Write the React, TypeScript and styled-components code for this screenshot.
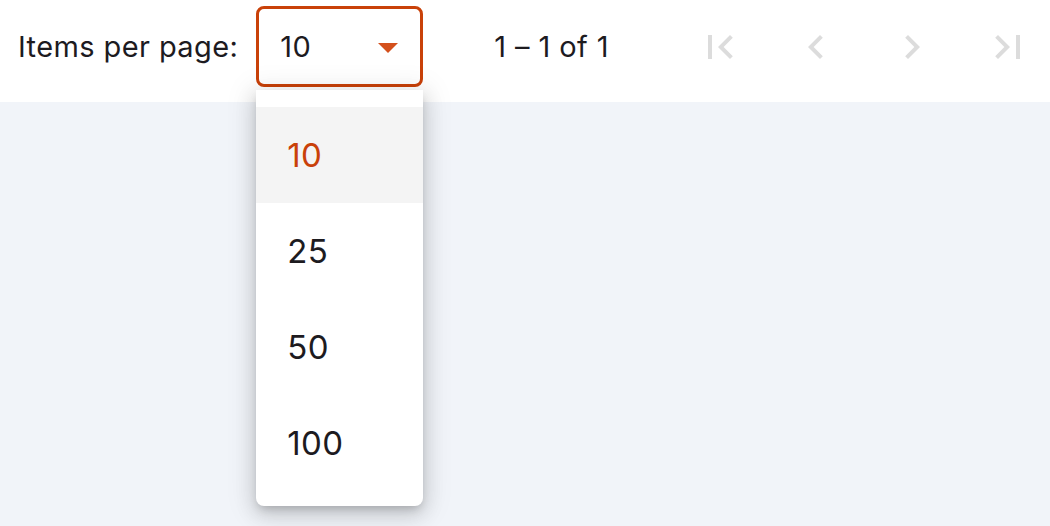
import styled, { createGlobalStyle } from "styled-components";

const GlobalStyle = createGlobalStyle`
  html, body {
    margin: 0;
    padding: 0;
    height: 100%;
    background: #f1f4f9;
    font-family: Inter, "Noto Sans", sans-serif;
  }
  #root {
    height: 100%;
  }
`;

const options = [10, 25, 50, 100];
const selected = 10;

const icons = {
  first: "M18.41 16.59L13.82 12l4.59-4.59L17 6l-6 6 6 6zM6 6h2v12H6z",
  prev: "M15.41 7.41L14 6l-6 6 6 6 1.41-1.41L10.83 12z",
  next: "M10 6L8.59 7.41 13.17 12l-4.58 4.59L10 18l6-6z",
  last: "M5.59 7.41L10.18 12l-4.59 4.59L7 18l6-6-6-6zM16 6h2v12h-2z",
};

const App = () => {
  return (
    <>
      <GlobalStyle />
      <Page>
        <Paginator>
          <PageSizeLabel>Items per page:</PageSizeLabel>
          <SelectWrapper>
            <SelectBox>
              <SelectValue>{selected}</SelectValue>
              <Arrow />
            </SelectBox>
            <Panel>
              {options.map((o) => (
                <Option key={o} active={o === selected}>
                  {o}
                </Option>
              ))}
            </Panel>
          </SelectWrapper>
          <RangeLabel>1 – 1 of 1</RangeLabel>
          <Actions>
            {(["first", "prev", "next", "last"] as const).map((k) => (
              <NavButton key={k} disabled>
                <svg width="48" height="48" viewBox="0 0 24 24">
                  <path d={icons[k]} fill="currentColor" />
                </svg>
              </NavButton>
            ))}
          </Actions>
        </Paginator>
      </Page>
    </>
  );
};

export default App;

// styles
const Page = styled.div`
  height: 100%;
  background: #f1f4f9;
`;
const Paginator = styled.div`
  box-sizing: border-box;
  display: flex;
  align-items: center;
  height: 102px;
  padding: 0 0 9px 18px;
  background: #ffffff;
  color: #1d1b1f;
`;
const PageSizeLabel = styled.div`
  font-size: 29px;
  margin-right: 18px;
  letter-spacing: 0.4px;
  white-space: nowrap;
`;
const SelectWrapper = styled.div`
  position: relative;
`;
const SelectBox = styled.div`
  box-sizing: border-box;
  width: 167px;
  height: 81px;
  border: 3px solid #c94109;
  border-radius: 8px;
  display: flex;
  align-items: center;
  padding: 0 22px 0 21px;
`;
const SelectValue = styled.span`
  flex: 1;
  font-size: 29px;
  letter-spacing: 0.3px;
`;
const Arrow = styled.span`
  width: 0;
  height: 0;
  border-left: 10px solid transparent;
  border-right: 10px solid transparent;
  border-top: 10px solid #d4501c;
  margin-top: 2px;
`;
const Panel = styled.div`
  position: absolute;
  top: calc(100% + 3px);
  left: 0;
  width: 167px;
  padding: 17px 0 15px;
  background: #ffffff;
  border-radius: 0 0 8px 8px;
  box-shadow: 0 5px 10px -3px rgba(0, 0, 0, 0.2),
    0 8px 20px 2px rgba(0, 0, 0, 0.12), 0 3px 28px 6px rgba(0, 0, 0, 0.08);
  z-index: 2;
`;
const Option = styled.div<{ active?: boolean }>`
  height: 96px;
  display: flex;
  align-items: center;
  padding-left: 31px;
  font-size: 33px;
  letter-spacing: 0.3px;
  color: ${(p) => (p.active ? "#c94109" : "#1d1b1f")};
  background: ${(p) => (p.active ? "#f4f4f4" : "#ffffff")};
`;
const RangeLabel = styled.div`
  font-size: 29px;
  margin-left: 71px;
  letter-spacing: 0.4px;
  white-space: nowrap;
`;
const Actions = styled.div`
  display: flex;
  margin-left: 87px;
  gap: 48px;
`;
const NavButton = styled.button`
  width: 48px;
  height: 48px;
  padding: 0;
  border: none;
  background: none;
  color: #dcdcdc;
  display: flex;
  align-items: center;
  justify-content: center;
  flex-shrink: 0;
`;
